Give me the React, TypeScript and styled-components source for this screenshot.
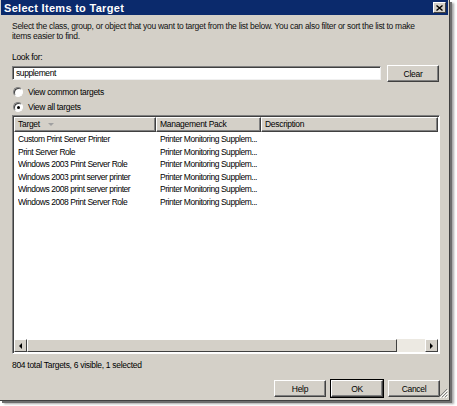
import styled, { createGlobalStyle } from 'styled-components'

const GlobalStyle = createGlobalStyle`
  html, body {
    margin: 0;
    padding: 0;
    background: #ffffff;
  }
  body {
    font-family: "Liberation Sans", Arial, sans-serif;
    font-size: 8.5px;
    letter-spacing: -0.3px;
    color: #000;
  }
`

const Page = styled.div`
  width: 457px;
  height: 406px;
  display: flex;
  align-items: flex-start;
`

const Window = styled.div`
  width: 449px;
  height: 400px;
  background: #d4d0c8;
  border-right: 1px solid #404040;
  border-bottom: 1px solid #404040;
  box-shadow: 2px 2px 0 #6e6e6e, 4px 3px 2px #a8a8a8;
  display: flex;
  flex-direction: column;
  position: relative;
`

const TitleBar = styled.div`
  height: 15px;
  margin: 0 1px;
  background: #0b2a6c;
  display: flex;
  align-items: center;
  justify-content: space-between;
  padding: 0 2px 0 3px;
`

const Title = styled.span`
  color: #fff;
  font-weight: bold;
  font-size: 11px;
  letter-spacing: 0.3px;
`

const CloseButton = styled.div`
  width: 11px;
  height: 9px;
  background: #d4d0c8;
  border: 1px solid;
  border-color: #fff #404040 #404040 #fff;
  display: flex;
  align-items: center;
  justify-content: center;
`

const Body = styled.div`
  flex: 1;
  display: flex;
  flex-direction: column;
  padding: 6px 10px 0 12px;
`

const Intro = styled.p`
  margin: 0;
  line-height: 10px;
  letter-spacing: -0.28px;
  color: #111;
`

const Label = styled.div`
  margin-top: 11px;
  line-height: 10px;
`

const SearchRow = styled.div`
  display: flex;
  align-items: flex-start;
  gap: 6px;
  margin-top: 3px;
`

const SearchInput = styled.div`
  flex: 1;
  height: 12px;
  margin-top: 1px;
  background: #fff;
  border: 1px solid;
  border-color: #808080 #f0f0f0 #f0f0f0 #808080;
  box-shadow: inset 1px 1px 0 #404040;
  padding-left: 3px;
  line-height: 12px;
  letter-spacing: -0.4px;
`

const Button = styled.div<{ $default?: boolean }>`
  width: 50px;
  height: 15px;
  display: flex;
  align-items: center;
  justify-content: center;
  background: #d4d0c8;
  border: 1px solid;
  border-color: #fff #404040 #404040 #fff;
  box-shadow: inset -1px -1px 0 #808080;
  ${({ $default }) => $default && 'outline: 1px solid #000;'}
`

const RadioRow = styled.div`
  display: flex;
  align-items: center;
  gap: 5px;
  margin-top: 5px;
  height: 10px;
  padding-left: 1px;
`

const Radio = styled.span<{ $checked?: boolean }>`
  width: 8px;
  height: 8px;
  border-radius: 50%;
  background: #fff;
  border: 1px solid;
  border-color: #808080 #fff #fff #808080;
  box-shadow: inset 1px 1px 0 #404040;
  display: flex;
  align-items: center;
  justify-content: center;
  &::after {
    content: '';
    width: 3px;
    height: 3px;
    border-radius: 50%;
    background: ${({ $checked }) => ($checked ? '#000' : 'transparent')};
  }
`

const ListView = styled.div`
  margin-top: 3px;
  height: 237px;
  display: flex;
  flex-direction: column;
  border: 1px solid;
  border-color: #808080 #fff #fff #808080;
  box-shadow: inset 1px 1px 0 #404040;
  background: #fff;
  margin-right: -1px;
`

const HeaderRow = styled.div`
  display: grid;
  grid-template-columns: 142px 105px 1fr;
  height: 15px;
  margin: 1px 1px 0 1px;
`

const HeaderCell = styled.div`
  background: #d4d0c8;
  border: 1px solid;
  border-color: #fff #404040 #404040 #fff;
  box-shadow: inset -1px -1px 0 #808080;
  padding-left: 3px;
  display: flex;
  align-items: center;
  gap: 8px;
  line-height: 13px;
`

const SortArrow = styled.span`
  width: 0;
  height: 0;
  border-left: 3px solid transparent;
  border-right: 3px solid transparent;
  border-top: 3px solid #a0a0a0;
`

const Rows = styled.div`
  flex: 1;
  padding-top: 1px;
`

const Row = styled.div`
  display: grid;
  grid-template-columns: 142px 105px 1fr;
  height: 12.5px;
  line-height: 12.5px;
  padding-left: 5px;
  letter-spacing: -0.45px;
`

const Cell = styled.div`
  white-space: nowrap;
  overflow: hidden;
`

const ScrollBar = styled.div`
  height: 13px;
  display: flex;
  margin: 0 1px 1px 1px;
  background: #ece9e2;
`

const ScrollArrow = styled.div`
  width: 11px;
  height: 11px;
  background: #d4d0c8;
  border: 1px solid;
  border-color: #fff #404040 #404040 #fff;
  display: flex;
  align-items: center;
  justify-content: center;
`

const Thumb = styled.div`
  width: 368px;
  height: 11px;
  background: #d4d0c8;
  border: 1px solid;
  border-color: #fff #404040 #404040 #fff;
`

const Track = styled.div`
  flex: 1;
  background: #ece9e2;
`

const Status = styled.div`
  margin-top: 6px;
  line-height: 10px;
`

const Footer = styled.div`
  display: flex;
  justify-content: flex-end;
  gap: 5px;
  margin-top: 10px;
  margin-right: -1px;
`

const Grip = styled.svg`
  position: absolute;
  right: 1px;
  bottom: 2px;
`

const rows = [
  'Custom Print Server Printer',
  'Print Server Role',
  'Windows 2003 Print Server Role',
  'Windows 2003 print server printer',
  'Windows 2008 print server printer',
  'Windows 2008 Print Server Role',
]

export default function App() {
  return (
    <Page>
      <GlobalStyle />
      <Window>
        <TitleBar>
          <Title>Select Items to Target</Title>
          <CloseButton>
            <svg width="7" height="6" viewBox="0 0 7 6">
              <path d="M0.5 0.5 L6.5 5.5 M6.5 0.5 L0.5 5.5" stroke="#000" strokeWidth="1.4" />
            </svg>
          </CloseButton>
        </TitleBar>
        <Body>
          <Intro>
            Select the class, group, or object that you want to target from the list below. You can also filter or sort the list to make
            <br />
            items easier to find.
          </Intro>
          <Label>Look for:</Label>
          <SearchRow>
            <SearchInput>supplement</SearchInput>
            <Button>Clear</Button>
          </SearchRow>
          <RadioRow>
            <Radio />
            <span>View common targets</span>
          </RadioRow>
          <RadioRow>
            <Radio $checked />
            <span>View all targets</span>
          </RadioRow>
          <ListView>
            <HeaderRow>
              <HeaderCell>
                Target <SortArrow />
              </HeaderCell>
              <HeaderCell>Management Pack</HeaderCell>
              <HeaderCell>Description</HeaderCell>
            </HeaderRow>
            <Rows>
              {rows.map((r) => (
                <Row key={r}>
                  <Cell>{r}</Cell>
                  <Cell>Printer Monitoring Supplem...</Cell>
                  <Cell />
                </Row>
              ))}
            </Rows>
            <ScrollBar>
              <ScrollArrow>
                <svg width="3" height="6" viewBox="0 0 3 6">
                  <path d="M3 0 L0 3 L3 6 Z" fill="#000" />
                </svg>
              </ScrollArrow>
              <Thumb />
              <Track />
              <ScrollArrow>
                <svg width="3" height="6" viewBox="0 0 3 6">
                  <path d="M0 0 L3 3 L0 6 Z" fill="#000" />
                </svg>
              </ScrollArrow>
            </ScrollBar>
          </ListView>
          <Status>804 total Targets, 6 visible, 1 selected</Status>
          <Footer>
            <Button>Help</Button>
            <Button $default>OK</Button>
            <Button>Cancel</Button>
          </Footer>
        </Body>
        <Grip width="10" height="10" viewBox="0 0 10 10">
          <path d="M9 1 L1 9 M9 4 L4 9 M9 7 L7 9" stroke="#808080" strokeWidth="1" />
          <path d="M10 2 L2 10 M10 5 L5 10 M10 8 L8 10" stroke="#fff" strokeWidth="1" />
        </Grip>
      </Window>
    </Page>
  )
}
